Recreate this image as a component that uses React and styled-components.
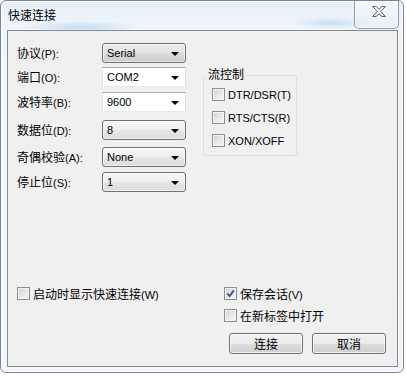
import React from "react";
import styled, { createGlobalStyle } from "styled-components";

const Global = createGlobalStyle`
  html, body { margin: 0; padding: 0; background: #ffffff; }
  body {
    font-family: "Liberation Sans", "Noto Sans CJK SC", sans-serif;
    font-size: 11px;
    color: #000;
  }
`;

const Window = styled.div`
  box-sizing: border-box;
  width: 404px;
  height: 373px;
  display: flex;
  flex-direction: column;
  border: 1px solid #7a8594;
  border-radius: 6px;
  background:
    radial-gradient(ellipse 60px 6px at 80px 26px, rgba(160, 200, 235, 0.55), transparent),
    radial-gradient(ellipse 40px 6px at 330px 22px, rgba(160, 200, 235, 0.5), transparent),
    linear-gradient(180deg, #e6eef8 0px, #f1f6fb 30px, #f3f7fb 100%);
  box-shadow: inset 0 0 0 1px rgba(255, 255, 255, 0.75);
  overflow: hidden;
`;

const TitleBar = styled.div`
  height: 29px;
  flex: none;
  display: flex;
  align-items: flex-start;
  justify-content: space-between;
  padding-left: 7px;
  padding-right: 4px;
`;

const Zh = styled.span`
  font-family: "Noto Sans CJK SC", sans-serif;
  font-size: 12px;
`;

const Title = styled.div`
  font-family: "Noto Sans CJK SC", sans-serif;
  font-size: 12px;
  line-height: 16px;
  margin-top: 6px;
`;

const CloseButton = styled.div`
  box-sizing: border-box;
  width: 45px;
  height: 29px;
  margin-top: -1px;
  display: flex;
  align-items: center;
  justify-content: center;
  padding-bottom: 5px;
  padding-left: 4px;
  border: 1px solid #8c9aac;
  border-top: none;
  border-radius: 0 0 5px 5px;
  background: linear-gradient(180deg, rgba(255,255,255,0.5), rgba(225,235,246,0.6));
  box-shadow: inset 0 0 0 1px rgba(255, 255, 255, 0.7);
`;

const Client = styled.div`
  flex: 1;
  margin: 0 5px 5px 6px;
  border: 1px solid #838a94;
  background: #f0f0f0;
  display: flex;
  flex-direction: column;
  padding: 12px 11px 12px 9px;
`;

const TopSection = styled.div`
  display: flex;
  align-items: flex-start;
`;

const Form = styled.div`
  display: flex;
  flex-direction: column;
`;

const Row = styled.div`
  display: grid;
  grid-template-columns: 85px 84px;
  align-items: center;
  height: 20px;
  margin-top: ${(p) => p.$mt || 0}px;
`;

const Label = styled.div`
  white-space: nowrap;
  line-height: 16px;
`;

const Combo = styled.div`
  box-sizing: border-box;
  height: 20px;
  display: flex;
  align-items: center;
  justify-content: space-between;
  padding: 0 6px 0 4px;
  border: 1px solid #707070;
  border-radius: 3px;
  background: ${(p) =>
    p.$active
      ? "linear-gradient(180deg, #ececec 0%, #e3e3e3 50%, #d9d9d9 51%, #cdcdcd 100%)"
      : "linear-gradient(180deg, #f6f6f6 0%, #efefef 50%, #e6e6e6 51%, #dcdcdc 100%)"};
  box-shadow: inset 0 0 0 1px rgba(255, 255, 255, 0.55);
`;

const EditCombo = styled(Combo)`
  border-radius: 0;
  border-color: #abadb3 #dbdfe6 #e3e9ef #e2e3ea;
  background: #ffffff;
  box-shadow: none;
`;

const Arrow = styled.span`
  width: 0;
  height: 0;
  border-left: 4px solid transparent;
  border-right: 4px solid transparent;
  border-top: 4px solid #000;
  margin-top: 1px;
`;

const GroupBox = styled.div`
  box-sizing: border-box;
  width: 94px;
  margin-left: 17px;
  margin-top: 32px;
  padding: 0 0 8px 8px;
  border: 1px solid #d5dfe5;
  border-radius: 3px;
  display: flex;
  flex-direction: column;
  align-items: flex-start;
`;

const GroupTitle = styled.div`
  font-family: "Noto Sans CJK SC", sans-serif;
  font-size: 12px;
  line-height: 14px;
  margin: -9px 0 0 -6px;
  padding: 0 2px;
  background: #f0f0f0;
`;

const CheckList = styled.div`
  display: flex;
  flex-direction: column;
  gap: ${(p) => p.$gap ?? 10}px;
  margin-top: ${(p) => p.$mt || 0}px;
`;

const CheckRow = styled.label`
  display: flex;
  align-items: center;
  gap: 3px;
  height: 13px;
  white-space: nowrap;
`;

const Box = styled.span`
  box-sizing: border-box;
  width: 13px;
  height: 13px;
  flex: none;
  display: flex;
  align-items: center;
  justify-content: center;
  border: 1px solid #8e8f8f;
  background: linear-gradient(135deg, #cdd0d4 0%, #e6e7e9 50%, #f7f7f7 100%);
  box-shadow: inset 0 0 0 1px #f4f4f4;
`;

const Spacer = styled.div`
  flex: 1;
`;

const BottomSection = styled.div`
  display: flex;
  justify-content: space-between;
  align-items: flex-start;
`;

const RightColumn = styled.div`
  width: 162px;
  display: flex;
  flex-direction: column;
`;

const ButtonRow = styled.div`
  display: flex;
  gap: 9px;
  padding-left: 5px;
  margin-top: 11px;
`;

const Button = styled.div`
  box-sizing: border-box;
  width: 74px;
  height: 21px;
  display: flex;
  align-items: center;
  justify-content: center;
  border: 1px solid #707070;
  border-radius: 3px;
  background: linear-gradient(180deg, #f2f2f2 0%, #ebebeb 50%, #dddddd 51%, #cfcfcf 100%);
  box-shadow: inset 0 0 0 1px rgba(255, 255, 255, 0.7);
  font-family: "Noto Sans CJK SC", sans-serif;
  font-size: 12px;
`;

function CloseGlyph() {
  return (
    <svg width="14" height="11" viewBox="0 0 15 12">
      <defs>
        <linearGradient id="xg" x1="0" y1="0" x2="0" y2="1">
          <stop offset="0" stopColor="#ffffff" />
          <stop offset="1" stopColor="#d8dde4" />
        </linearGradient>
      </defs>
      <polygon
        points="0.5,0.5 4.5,0.5 7.5,3.5 10.5,0.5 14.5,0.5 9.5,6 14.5,11.5 10.5,11.5 7.5,8.5 4.5,11.5 0.5,11.5 5.5,6"
        fill="url(#xg)"
        stroke="#4c5563"
        strokeWidth="1"
        strokeLinejoin="round"
      />
    </svg>
  );
}

function Check({ checked, children }) {
  return (
    <CheckRow>
      <Box>
        {checked && (
          <svg width="9" height="9" viewBox="0 0 9 9">
            <path d="M1.3 4.6 L3.6 7 L7.8 1.4" fill="none" stroke="#3d4f8e" strokeWidth="1.8" />
          </svg>
        )}
      </Box>
      <span>{children}</span>
    </CheckRow>
  );
}

const fields = [
  { zh: "协议", key: "(P):", value: "Serial", kind: "drop", active: true, mt: 0 },
  { zh: "端口", key: "(O):", value: "COM2", kind: "edit", mt: 4 },
  { zh: "波特率", key: "(B):", value: "9600", kind: "edit", mt: 5 },
  { zh: "数据位", key: "(D):", value: "8", kind: "drop", mt: 8 },
  { zh: "奇偶校验", key: "(A):", value: "None", kind: "drop", mt: 7 },
  { zh: "停止位", key: "(S):", value: "1", kind: "drop", mt: 5 },
];

export default function App() {
  return (
    <>
      <Global />
      <Window>
        <TitleBar>
          <Title>快速连接</Title>
          <CloseButton>
            <CloseGlyph />
          </CloseButton>
        </TitleBar>
        <Client>
          <TopSection>
            <Form>
              {fields.map((f) => {
                const C = f.kind === "edit" ? EditCombo : Combo;
                return (
                  <Row key={f.zh} $mt={f.mt}>
                    <Label>
                      <Zh>{f.zh}</Zh>
                      {f.key}
                    </Label>
                    <C $active={f.active}>
                      <span>{f.value}</span>
                      <Arrow />
                    </C>
                  </Row>
                );
              })}
            </Form>
            <GroupBox>
              <GroupTitle>流控制</GroupTitle>
              <CheckList $mt={7}>
                <Check>DTR/DSR(T)</Check>
                <Check>RTS/CTS(R)</Check>
                <Check>XON/XOFF</Check>
              </CheckList>
            </GroupBox>
          </TopSection>
          <Spacer />
          <BottomSection>
            <Check>
              <Zh>启动时显示快速连接</Zh>(W)
            </Check>
            <RightColumn>
              <CheckList $gap={9}>
                <Check checked>
                  <Zh>保存会话</Zh>(V)
                </Check>
                <Check>
                  <Zh>在新标签中打开</Zh>
                </Check>
              </CheckList>
              <ButtonRow>
                <Button>连接</Button>
                <Button>取消</Button>
              </ButtonRow>
            </RightColumn>
          </BottomSection>
        </Client>
      </Window>
    </>
  );
}
